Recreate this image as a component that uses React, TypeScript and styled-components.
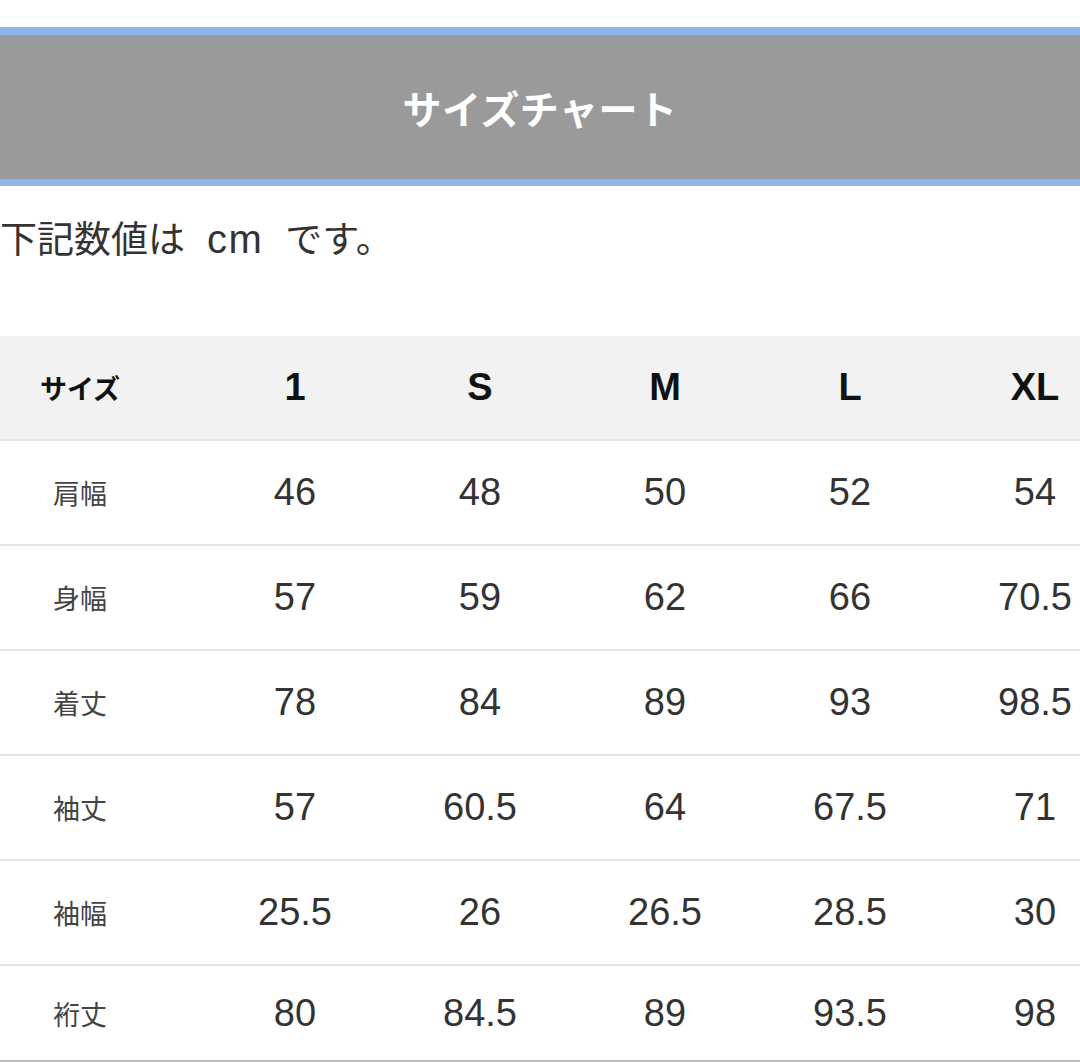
import React from "react";
import styled, { createGlobalStyle } from "styled-components";

const GlobalStyle = createGlobalStyle`
  html, body {
    margin: 0;
    padding: 0;
    background: #ffffff;
    overflow: hidden;
  }
  body {
    font-family: "Liberation Sans", "Noto Sans CJK JP", sans-serif;
  }
`;

const Page = styled.div`
  width: 1080px;
  height: 1062px;
  padding-top: 27px;
  box-sizing: border-box;
  overflow: hidden;
`;

const TitleBar = styled.div`
  height: 144px;
  background: #9a9a9a;
  border-top: 8px solid #8fb6e8;
  border-bottom: 7px solid #8fb6e8;
  display: flex;
  align-items: center;
  justify-content: center;
`;

const Title = styled.h1`
  margin: 0;
  color: #ffffff;
  font-family: "Noto Sans CJK JP", sans-serif;
  font-weight: 700;
  font-size: 39px;
  letter-spacing: 0.5px;
`;

const Note = styled.p`
  margin: 26px 0 0 0;
  height: 50px;
  line-height: 50px;
  font-family: "Noto Sans CJK JP", sans-serif;
  font-size: 37px;
  color: #333333;
  white-space: nowrap;
`;

const Unit = styled.span`
  display: inline-block;
  margin: 0 22px 0 22px;
  font-family: "Liberation Sans", sans-serif;
  font-size: 40px;
  letter-spacing: 1.5px;
`;

const Table = styled.div`
  margin-top: 74px;
  display: flex;
  flex-direction: column;
`;

const Row = styled.div<{ $head?: boolean; $last?: boolean }>`
  display: grid;
  grid-template-columns: 160px repeat(5, 100px);
  column-gap: 85px;
  align-items: center;
  height: ${(p) => (p.$last ? "94px" : "103px")};
  background: ${(p) => (p.$head ? "#f2f2f2" : "#ffffff")};
  border-bottom: 2px solid ${(p) => (p.$last ? "#bdbdbd" : "#e6e6e6")};
`;

const HeadLabel = styled.div`
  text-align: center;
  font-family: "Noto Sans CJK JP", sans-serif;
  font-weight: 700;
  font-size: 27px;
  color: #111111;
`;

const HeadCell = styled.div`
  text-align: center;
  font-family: "Liberation Sans", sans-serif;
  font-weight: 700;
  font-size: 38px;
  color: #111111;
  white-space: nowrap;
`;

const Label = styled.div`
  text-align: center;
  font-family: "Noto Sans CJK JP", sans-serif;
  font-size: 27px;
  color: #444444;
`;

const Cell = styled.div`
  text-align: center;
  font-family: "Liberation Sans", sans-serif;
  font-size: 38px;
  color: #333333;
  white-space: nowrap;
`;

const sizes = ["1", "S", "M", "L", "XL"];

const rows: { label: string; values: string[] }[] = [
  { label: "肩幅", values: ["46", "48", "50", "52", "54"] },
  { label: "身幅", values: ["57", "59", "62", "66", "70.5"] },
  { label: "着丈", values: ["78", "84", "89", "93", "98.5"] },
  { label: "袖丈", values: ["57", "60.5", "64", "67.5", "71"] },
  { label: "袖幅", values: ["25.5", "26", "26.5", "28.5", "30"] },
  { label: "裄丈", values: ["80", "84.5", "89", "93.5", "98"] },
];

export default function App() {
  return (
    <>
      <GlobalStyle />
      <Page>
        <TitleBar>
          <Title>サイズチャート</Title>
        </TitleBar>
        <Note>
          下記数値は<Unit>cm</Unit>です。
        </Note>
        <Table>
          <Row $head>
            <HeadLabel>サイズ</HeadLabel>
            {sizes.map((s) => (
              <HeadCell key={s}>{s}</HeadCell>
            ))}
          </Row>
          {rows.map((r, i) => (
            <Row key={r.label} $last={i === rows.length - 1}>
              <Label>{r.label}</Label>
              {r.values.map((v, j) => (
                <Cell key={j}>{v}</Cell>
              ))}
            </Row>
          ))}
        </Table>
      </Page>
    </>
  );
}
